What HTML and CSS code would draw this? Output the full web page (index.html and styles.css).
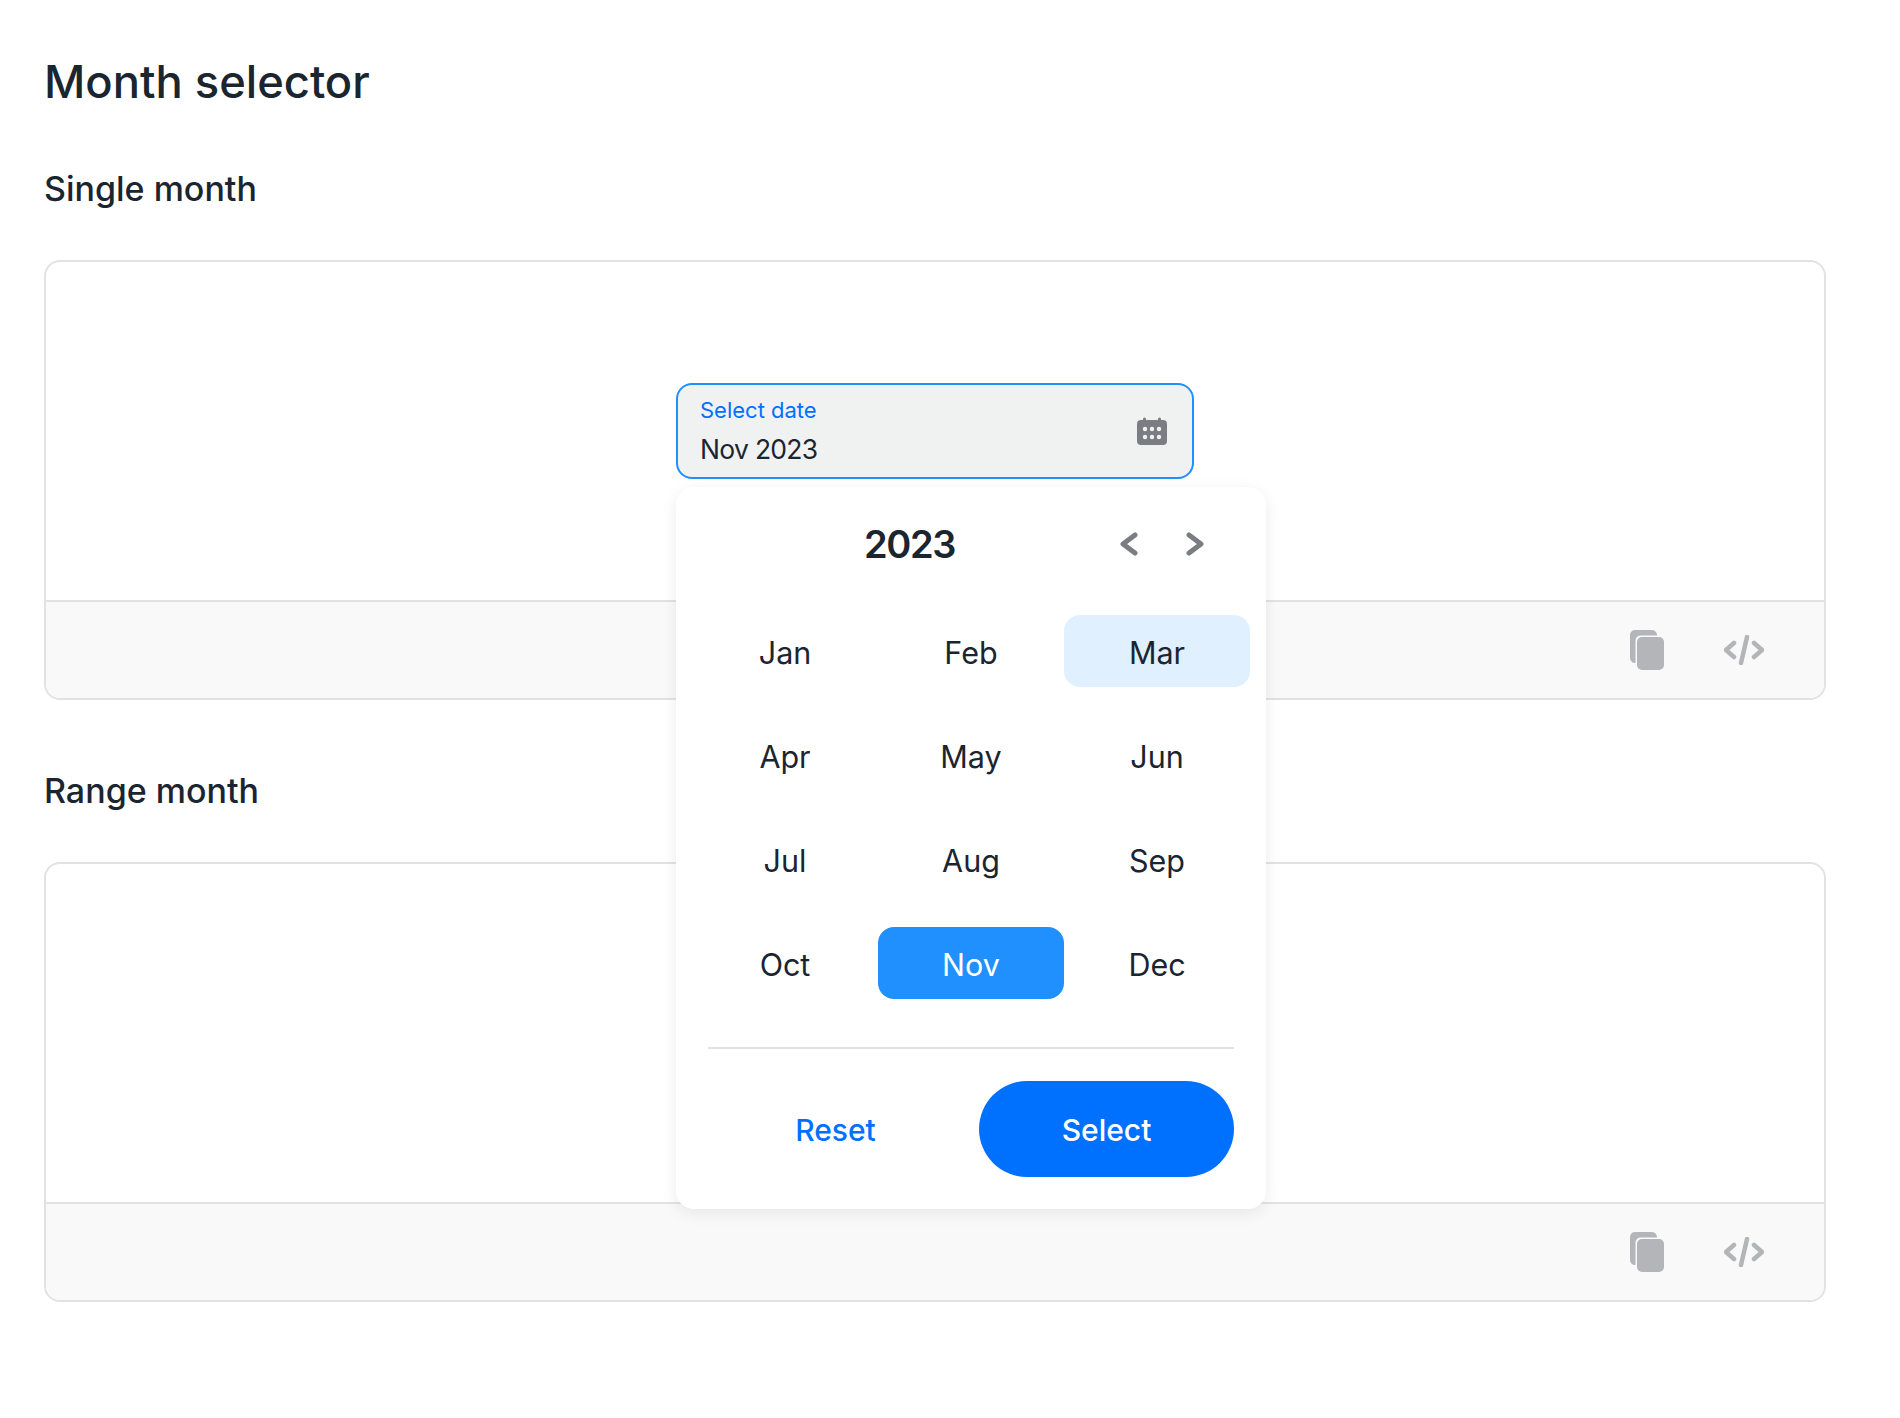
FILE: index.html
```html
<!DOCTYPE html>
<html>

<head>
    <meta charset="utf-8">
    <title>Month selector</title>
    <meta name="viewport" content="width=device-width, initial-scale=1">
    <link rel="stylesheet" href="styles.css">
</head>

<body>
    <div class="page">
        <h1>Month selector</h1>

        <h2>Single month</h2>
        <section class="panel">
            <div class="preview">
                <div class="date-field">
                    <div class="date-input">
                        <div class="date-text">
                            <span class="date-label">Select date</span>
                            <span class="date-value">Nov 2023</span>
                        </div>
                        <svg class="calendar-icon" viewBox="0 0 30 28">
                            <path d="M6 2a1.5 1.5 0 0 1 3 0v1h12V2a1.5 1.5 0 0 1 3 0v1h2a4 4 0 0 1 4 4v17a4 4 0 0 1-4 4H4a4 4 0 0 1-4-4V7a4 4 0 0 1 4-4h2z" fill="#7a7d82" />
                            <g fill="#f0f2f2">
                                <circle cx="8" cy="12" r="2.2" />
                                <circle cx="15" cy="12" r="2.2" />
                                <circle cx="22" cy="12" r="2.2" />
                                <circle cx="8" cy="20" r="2.2" />
                                <circle cx="15" cy="20" r="2.2" />
                                <circle cx="22" cy="20" r="2.2" />
                            </g>
                        </svg>
                    </div>

                    <div class="month-popup">
                        <div class="popup-head">
                            <span class="popup-year">2023</span>
                            <svg class="chevron chevron-prev" viewBox="0 0 18 24">
                                <path d="M15 3L3 12l12 9" />
                            </svg>
                            <svg class="chevron chevron-next" viewBox="0 0 18 24">
                                <path d="M3 3l12 9L3 21" />
                            </svg>
                        </div>
                        <div class="month-grid">
                            <div class="month">Jan</div>
                            <div class="month">Feb</div>
                            <div class="month month-hover">Mar</div>
                            <div class="month">Apr</div>
                            <div class="month">May</div>
                            <div class="month">Jun</div>
                            <div class="month">Jul</div>
                            <div class="month">Aug</div>
                            <div class="month">Sep</div>
                            <div class="month">Oct</div>
                            <div class="month month-active">Nov</div>
                            <div class="month">Dec</div>
                        </div>
                        <div class="popup-foot">
                            <button type="button" class="btn-reset">Reset</button>
                            <button type="button" class="btn-select">Select</button>
                        </div>
                    </div>
                </div>
            </div>
            <div class="toolbar">
                <svg class="copy-icon" viewBox="0 0 34 40">
                    <path d="M5 0h17a5 5 0 0 1 5 5.5H10.5a5 5 0 0 0-5 5V33A5 5 0 0 1 0 28V5a5 5 0 0 1 5-5z" />
                    <rect x="7" y="7" width="27" height="33" rx="5" />
                </svg>
                <svg class="code-icon" viewBox="0 0 40 30">
                    <path d="M10 8L2 15l8 7M30 8l8 7-8 7M23 2l-6 26" />
                </svg>
            </div>
        </section>

        <h2>Range month</h2>
        <section class="panel">
            <div class="preview"></div>
            <div class="toolbar">
                <svg class="copy-icon" viewBox="0 0 34 40">
                    <path d="M5 0h17a5 5 0 0 1 5 5.5H10.5a5 5 0 0 0-5 5V33A5 5 0 0 1 0 28V5a5 5 0 0 1 5-5z" />
                    <rect x="7" y="7" width="27" height="33" rx="5" />
                </svg>
                <svg class="code-icon" viewBox="0 0 40 30">
                    <path d="M10 8L2 15l8 7M30 8l8 7-8 7M23 2l-6 26" />
                </svg>
            </div>
        </section>
    </div>
</body>

</html>
```

FILE: styles.css
```css
body {
    font-family: Inter, "Noto Sans", sans-serif;
    background-color: #fff;
    color: #1b2530;
    margin: 0;
}

.page {
    padding: 52px 74px 0 44px;
}

h1 {
    font-size: 45.3px;
    line-height: 60px;
    font-weight: 500;
    margin: 0 0 59px;
}

h2 {
    font-size: 34px;
    line-height: 36px;
    font-weight: 500;
    margin: 0 0 53px;
}

.panel {
    border: 2px solid #e2e2e2;
    border-radius: 16px;
    height: 440px;
    box-sizing: border-box;
    margin-bottom: 73px;
    display: flex;
    flex-direction: column;
}

.preview {
    height: 338px;
    box-sizing: border-box;
    padding-top: 121px;
    display: flex;
    justify-content: center;
}

.toolbar {
    flex: 1;
    background-color: #f9f9f9;
    border-top: 2px solid #e2e2e2;
    border-radius: 0 0 14px 14px;
    display: flex;
    justify-content: flex-end;
    align-items: center;
    gap: 60px;
    padding-right: 60px;
}

.copy-icon {
    width: 34px;
    height: 40px;
    fill: #b4b5b8;
}

.code-icon {
    width: 40px;
    height: 30px;
    fill: none;
    stroke: #b4b5b8;
    stroke-width: 4.5;
    stroke-linecap: round;
    stroke-linejoin: round;
}

.date-field {
    position: relative;
    width: 518px;
}

.date-input {
    height: 96px;
    box-sizing: border-box;
    background-color: #f0f2f2;
    border: 2px solid #2090ff;
    border-radius: 16px;
    padding: 0 25px 0 22px;
    display: flex;
    justify-content: space-between;
    align-items: center;
}

.date-text {
    display: flex;
    flex-direction: column;
    gap: 9px;
    padding-top: 1px;
}

.date-label {
    font-size: 22px;
    line-height: 26px;
    color: #0070ff;
}

.date-value {
    font-size: 26.5px;
    line-height: 34px;
    letter-spacing: -0.7px;
}

.calendar-icon {
    width: 30px;
    height: 28px;
}

.month-popup {
    position: absolute;
    top: 104px;
    left: 0;
    width: 590px;
    height: 722px;
    box-sizing: border-box;
    background-color: #fff;
    border-radius: 18px;
    box-shadow: 0 4px 16px rgba(0, 0, 0, 0.08);
    padding: 0 16px;
}

.popup-head {
    position: relative;
    height: 128px;
    box-sizing: border-box;
    padding-bottom: 15px;
    display: flex;
    justify-content: center;
    align-items: center;
}

.popup-year {
    font-size: 38px;
    font-weight: 600;
    letter-spacing: -1.4px;
    margin-right: 123px;
}

.chevron {
    position: absolute;
    width: 18px;
    height: 24px;
    top: 45px;
    fill: none;
    stroke: #7a7d82;
    stroke-width: 5;
    stroke-linecap: round;
    stroke-linejoin: round;
}

.chevron-prev {
    left: 428px;
}

.chevron-next {
    left: 494px;
}

.month-grid {
    display: grid;
    grid-template-columns: repeat(3, 186px);
    grid-auto-rows: 72px;
    row-gap: 32px;
}

.month {
    font-size: 30.5px;
    padding-top: 2px;
    display: flex;
    justify-content: center;
    align-items: center;
    border-radius: 16px;
}

.month-hover {
    background-color: #e0f0ff;
}

.month-active {
    background-color: #2090ff;
    color: #fff;
}

.popup-foot {
    margin: 48px 16px 0;
    padding-top: 32px;
    border-top: 2px solid #e2e2e2;
    display: grid;
    grid-template-columns: 1fr 1fr;
    column-gap: 16px;
}

.popup-foot button {
    height: 96px;
    border: 0;
    border-radius: 48px;
    padding-top: 3px;
    font-family: inherit;
    font-size: 30px;
    font-weight: 500;
    cursor: pointer;
}

.btn-reset {
    background-color: transparent;
    color: #0070ff;
}

.btn-select {
    background-color: #0070ff;
    color: #fff;
}
```
